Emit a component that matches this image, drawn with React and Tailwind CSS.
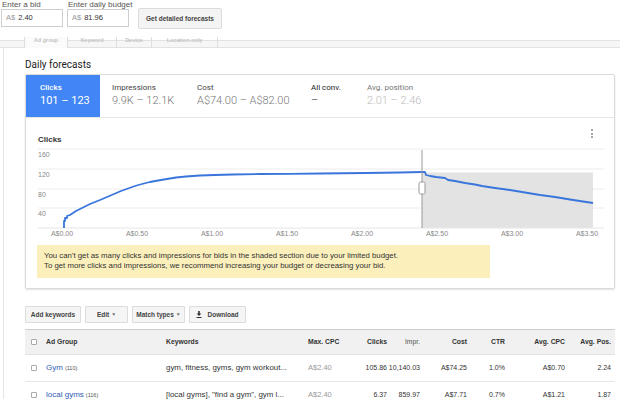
import React from 'react';

const CURVE =
  'M64,228 L64,221 L65,221 L65,218 L67,218 L67,216 L70,215 L73,213 L76,211 L80,209 L85,206.5 L90,204 L95,202 L100,200 L107,197 L114,194 L121,191 L128,188.5 L135,186 L142,184 L150,182 L158,180.5 L167,179 L176,177.5 L186,176.5 L200,175.5 L215,175 L233,174.5 L260,174 L290,173.8 L320,173.5 L366,173 L400,172.5 L422,172 L425,172 L426,175 L430,176 L436,177 L445,178 L448,180 L455,181 L465,183 L475,184.5 L482,186 L495,188 L510,190 L525,192.5 L540,195 L555,197 L570,199.5 L583,201.5 L593,203';

const Y_TICKS = [
  { label: '160', y: 149 },
  { label: '120', y: 169 },
  { label: '80', y: 189 },
  { label: '40', y: 208 },
];

const X_TICKS = ['A$0.00', 'A$0.50', 'A$1.00', 'A$1.50', 'A$2.00', 'A$2.50', 'A$3.00', 'A$3.50'];

const FORECAST_TABS = [
  { label: 'Impressions', value: '9.9K – 12.1K', w: 'w-[85px]', labelColor: 'text-[#444]', valueColor: 'text-[#777]' },
  { label: 'Cost', value: 'A$74.00 – A$82.00', w: 'w-[114px]', labelColor: 'text-[#444]', valueColor: 'text-[#777]' },
  { label: 'All conv.', value: '–', w: 'w-[56px]', labelColor: 'text-[#222]', valueColor: 'text-[#333]' },
  { label: 'Avg. position', value: '2.01 – 2.46', w: 'w-[120px]', labelColor: 'text-[#777]', valueColor: 'text-[#bbb]' },
];

const ROWS = [
  {
    name: 'Gym',
    count: '(110)',
    keywords: 'gym, fitness, gyms, gym workout...',
    cpc: 'A$2.40',
    values: ['105.86', '10,140.03', 'A$74.25', '1.0%', 'A$0.70', '2.24'],
  },
  {
    name: 'local gyms',
    count: '(116)',
    keywords: '[local gyms], "find a gym", gym l...',
    cpc: 'A$2.40',
    values: ['6.37', '859.97', 'A$7.71', '0.7%', 'A$1.21', '1.87'],
  },
];

const GRID = 'grid grid-cols-[18px_117px_143px_42px_46px_33px_47px_38px_60px_46px]';

function Checkbox() {
  return <span className="block w-[6px] h-[6px] border border-[#a9a9a9] rounded-[1px] bg-white ml-[6px]" />;
}

function NumCell({ children, className = '' }) {
  return (
    <div className={`flex items-center justify-end pr-[4px] whitespace-nowrap ${className}`}>{children}</div>
  );
}

function Chart() {
  return (
    <svg width="588" height="95" viewBox="26 145 588 95" className="block">
      {Y_TICKS.map((t) => (
        <line key={t.label} x1="38" x2="604" y1={t.y} y2={t.y} stroke="#ececec" strokeWidth="1" />
      ))}
      <rect x="422" y="172.5" width="171" height="55.5" fill="#e3e3e3" />
      <line x1="38" x2="604" y1="228" y2="228" stroke="#e6e6e6" strokeWidth="1" />
      {Y_TICKS.map((t) => (
        <text
          key={t.label}
          x="38"
          y={t.y + 7.5}
          fontSize="7"
          fill="#888"
          fontFamily="Liberation Sans, Arial, sans-serif"
        >
          {t.label}
        </text>
      ))}
      {X_TICKS.map((l, i) => (
        <text
          key={l}
          x={62 + i * 75}
          y="235.5"
          fontSize="7"
          fill="#888"
          textAnchor="middle"
          fontFamily="Liberation Sans, Arial, sans-serif"
        >
          {l}
        </text>
      ))}
      <path d={CURVE} fill="none" stroke="#3a75dc" strokeWidth="1.8" strokeLinejoin="round" />
      <line x1="422" x2="422" y1="150" y2="228" stroke="#9a9a9a" strokeWidth="1" />
      <rect x="419" y="182" width="6" height="12" rx="1.5" fill="#fff" stroke="#999" strokeWidth="1" />
    </svg>
  );
}

export default function App() {
  return (
    <div className="w-[620px] h-[399px] overflow-hidden bg-white text-[#333] font-['Liberation_Sans',Arial,sans-serif]">
      {/* bid / budget form */}
      <div className="h-[37px] flex items-start pl-[1px]">
        <div className="w-[62px]">
          <div className="h-[9px] text-[8px] leading-[9px] text-[#555] pl-[1px]">Enter a bid</div>
          <div className="h-[18px] border border-[#cfcfcf] flex items-center pl-[4px] text-[7.5px]">
            <span className="text-[#999] mr-[3px]">A$</span>2.40
          </div>
        </div>
        <div className="w-[62px] ml-[4px]">
          <div className="h-[9px] text-[8px] leading-[9px] text-[#555] pl-[1px] whitespace-nowrap">
            Enter daily budget
          </div>
          <div className="h-[18px] border border-[#cfcfcf] flex items-center pl-[4px] text-[7.5px]">
            <span className="text-[#999] mr-[3px]">A$</span>81.96
          </div>
        </div>
        <button className="ml-[9px] mt-[8px] w-[84px] h-[21px] bg-[#f4f4f4] border border-[#dcdcdc] rounded-[2px] text-[6.5px] font-bold text-[#444]">
          Get detailed forecasts
        </button>
      </div>

      {/* tab strip */}
      <div className="h-[11px] relative">
        <div className="absolute left-0 right-0 top-[3px] h-[8px] bg-[#f6f6f6] border-y border-[#e2e2e2]" />
        <div className="relative flex h-[11px] pl-[24px] text-[5.5px] text-[#c4c4c4] font-bold">
          <div className="w-[44px] bg-[#fbfbfb] border-x border-[#dedede] flex justify-center leading-[7px]">
            Ad group
          </div>
          <div className="w-[49px] border-r border-[#dedede] flex justify-center leading-[7px]">
            Keyword
          </div>
          <div className="w-[35px] border-r border-[#dedede] flex justify-center leading-[7px]">
            Device
          </div>
          <div className="w-[66px] border-r border-[#dedede] flex justify-center leading-[7px]">
            Location only
          </div>
        </div>
      </div>

      {/* main content */}
      <div className="ml-[3px] border-l border-[#e4e4e4] pl-[21px] h-[351px]">
        <div className="w-[590px]">
          <div className="pt-[11px] text-[10px] leading-[12px] text-[#222] font-['Roboto',sans-serif]">
            Daily forecasts
          </div>

          {/* forecast card */}
          <div className="mt-[3px] border border-[#dadada] rounded-[2px] shadow-[0_1px_2px_rgba(0,0,0,0.12)] font-['Roboto',sans-serif]">
            <div className="flex h-[43px] border-b border-[#e6e6e6]">
              <div className="w-[74px] bg-[#4285f4] text-white pl-[14px] pt-[8px]">
                <div className="text-[8px] leading-[10px] font-medium">Clicks</div>
                <div className="text-[11px] leading-[13px] mt-[1px] whitespace-nowrap">101 – 123</div>
              </div>
              {FORECAST_TABS.map((t) => (
                <div key={t.label} className={`${t.w} pl-[12px] pt-[8px]`}>
                  <div className={`text-[8px] leading-[10px] ${t.labelColor}`}>{t.label}</div>
                  <div className={`text-[11px] leading-[13px] mt-[1px] font-light whitespace-nowrap ${t.valueColor}`}>
                    {t.value}
                  </div>
                </div>
              ))}
            </div>

            <div className="relative pb-[10px]">
              <div className="pt-[17px] pl-[12px] text-[8px] leading-[10px] font-bold text-[#333] font-['Liberation_Sans',Arial,sans-serif]">
                Clicks
              </div>
              <div className="absolute top-[11px] right-[21px] flex flex-col gap-[1.5px]">
                <span className="block w-[2px] h-[2px] bg-[#888] rounded-full" />
                <span className="block w-[2px] h-[2px] bg-[#888] rounded-full" />
                <span className="block w-[2px] h-[2px] bg-[#888] rounded-full" />
              </div>
              <Chart />
              <div className="ml-[11px] mt-[5px] w-[453px] h-[33px] bg-[#fbefbc] pl-[7px] pt-[6px] text-[7.8px] leading-[10px] text-[#333] font-['Liberation_Sans',Arial,sans-serif]">
                <div>You can't get as many clicks and impressions for bids in the shaded section due to your limited budget.</div>
                <div>To get more clicks and impressions, we recommend increasing your budget or decreasing your bid.</div>
              </div>
            </div>
          </div>

          {/* toolbar */}
          <div className="mt-[17px] flex gap-[4px] text-[6.5px] font-bold text-[#444]">
            <button className="w-[56px] h-[17px] bg-[#f5f5f5] border border-[#dcdcdc] rounded-[1px]">Add keywords</button>
            <button className="w-[43px] h-[17px] bg-[#f5f5f5] border border-[#dcdcdc] rounded-[1px] flex items-center justify-center gap-[2px]">
              Edit <span className="text-[5px] text-[#777]">▼</span>
            </button>
            <button className="w-[53px] h-[17px] bg-[#f5f5f5] border border-[#dcdcdc] rounded-[1px] flex items-center justify-center gap-[2px]">
              Match types <span className="text-[5px] text-[#777]">▼</span>
            </button>
            <button className="w-[57px] h-[17px] bg-[#f5f5f5] border border-[#dcdcdc] rounded-[1px] flex items-center justify-center gap-[5px]">
              <svg width="6" height="7" viewBox="0 0 6 7">
                <path d="M2.2 0h1.6v2.6h1.6L3 5 0.6 2.6h1.6z" fill="#333" />
                <rect x="0.5" y="6" width="5" height="1" fill="#333" />
              </svg>
              Download
            </button>
          </div>

          {/* table */}
          <div className="mt-[6px] text-[7px]">
            <div className={`${GRID} h-[26px] bg-[#f1f1f1] border-t border-[#cdcdcd] border-b border-b-[#e2e2e2] font-bold text-[6.8px] text-[#333]`}>
              <div className="flex items-center"><Checkbox /></div>
              <div className="flex items-center pl-[3px]">Ad Group</div>
              <div className="flex items-center pl-[6px]">Keywords</div>
              <div className="flex items-center pl-[5px] whitespace-nowrap">Max. CPC</div>
              <NumCell>Clicks</NumCell>
              <NumCell className="font-normal text-[#555]">Impr.</NumCell>
              <NumCell>Cost</NumCell>
              <NumCell>CTR</NumCell>
              <NumCell>Avg. CPC</NumCell>
              <NumCell>Avg. Pos.</NumCell>
            </div>
            {ROWS.map((r) => (
              <div key={r.name} className={`${GRID} h-[27px] border-b border-[#e6e6e6]`}>
                <div className="flex items-center"><Checkbox /></div>
                <div className="flex items-center pl-[3px] whitespace-nowrap">
                  <span className="text-[8px] text-[#2f5db5]">{r.name}</span>
                  <span className="text-[5.5px] text-[#555] ml-[2px]">{r.count}</span>
                </div>
                <div className="flex items-center pl-[6px] whitespace-nowrap text-[7.9px] text-[#333]">{r.keywords}</div>
                <div className="flex items-center pl-[5px] text-[7.5px] text-[#999]">{r.cpc}</div>
                {r.values.map((v, i) => (
                  <NumCell key={i}>{v}</NumCell>
                ))}
              </div>
            ))}
          </div>
        </div>
      </div>
    </div>
  );
}
